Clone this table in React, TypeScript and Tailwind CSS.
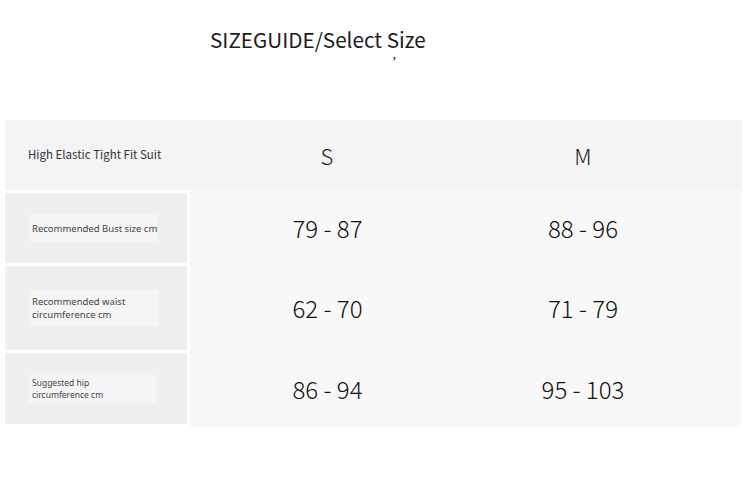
const font = { fontFamily: '"Noto Sans CJK SC", "Noto Sans", sans-serif' };
const labelFont = { fontFamily: '"Noto Sans", "Open Sans", sans-serif' };

const rows = [
  { label: ['Recommended Bust size cm'], s: '79 - 87', m: '88 - 96', h: 'h-[70px]', box: 'w-[128px] h-[28px]', size: 'text-[9.5px] leading-[13px]' },
  { label: ['Recommended waist', 'circumference cm'], s: '62 - 70', m: '71 - 79', h: 'h-[84px]', box: 'w-[129px] h-[36px]', size: 'text-[9.5px] leading-[13px]' },
  { label: ['Suggested hip', 'circumference cm'], s: '86 - 94', m: '95 - 103', h: 'h-[71px]', box: 'w-[127px] h-[28px]', size: 'text-[8.5px] leading-[12px]' },
];

export default function App() {
  return (
    <div className="w-[750px] h-[478px] bg-white text-[#1c1c1c]" style={font}>
      <div className="h-[120px] pl-[210px] pt-[25px]">
        <div className="relative inline-block text-[20.7px] leading-[28px]">
          SIZEGUIDE/Select Size
          <span className="absolute left-[183px] top-[32px] text-[11px] font-bold leading-[10px]">&#8217;</span>
        </div>
      </div>

      <div className="ml-[5px] w-[737px] h-[70px] bg-[#f4f4f4] flex items-center">
        <div className="w-[182px] pl-[23px] text-[11.5px] text-[#333]">High Elastic Tight Fit Suit</div>
        <div className="w-[272px] text-center text-[22px] font-light pl-[8px]">S</div>
        <div className="w-[242px] text-center text-[22px] font-light pl-[6px]">M</div>
      </div>

      <div className="ml-[5px] w-[737px] flex">
        <div className="w-[182px] flex flex-col pt-[3px] gap-[3px] pb-[3px]">
          {rows.map((r, i) => (
            <div key={i} className={`${r.h} bg-[#efefef] flex items-center pl-[24px]`}>
              <div
                className={`${r.box} ${r.size} bg-[#f5f5f5] flex flex-col justify-center pl-[3px] text-[#444] whitespace-nowrap`}
                style={labelFont}
              >
                {r.label.map((l) => (
                  <span key={l}>{l}</span>
                ))}
              </div>
            </div>
          ))}
        </div>
        <div className="ml-[3px] flex-1 bg-[#f8f8f8] flex flex-col pt-[3px] gap-[3px] pb-[3px]">
          {rows.map((r, i) => (
            <div key={i} className={`${r.h} flex items-center text-[24px] font-light text-[#111]`}>
              <div className="w-[269px] text-center pl-[6px]">{r.s}</div>
              <div className="w-[242px] text-center pl-[6px]">{r.m}</div>
            </div>
          ))}
        </div>
      </div>
    </div>
  );
}
